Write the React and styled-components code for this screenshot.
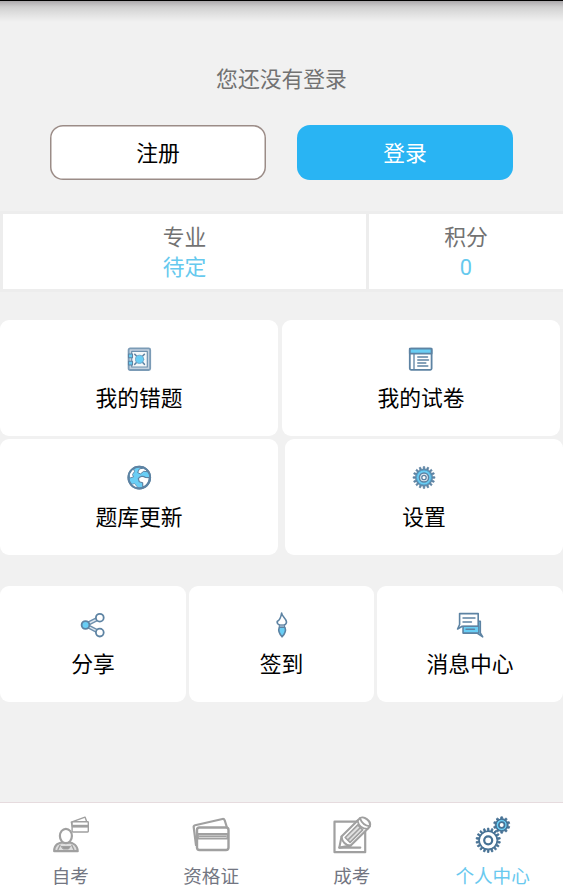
import React from "react";
import styled, { createGlobalStyle } from "styled-components";

const GlobalStyle = createGlobalStyle`
  * { box-sizing: border-box; }
  body { margin: 0; background: #f1f1f1; }
  button { font: inherit; padding: 0; margin: 0; border: 0; background: none; cursor: pointer; }
`;

const Screen = styled.div`
  width: 563px;
  height: 888px;
  display: flex;
  flex-direction: column;
  overflow: hidden;
  background: #f1f1f1;
  font-family: Roboto, "Noto Sans CJK SC", sans-serif;
  font-size: 21.8px;
  line-height: 30px;
  color: #000;
`;

const StatusShade = styled.div`
  flex: none;
  height: 22px;
  border-top: 1px solid #000;
  background: linear-gradient(#a9a7a9 0, #b8b6b8 2px, #cfcfcf 6px, #dcdcdc 11px, #e7e7e7 16px, #f1f1f1 21px);
`;

const Account = styled.header`
  flex: none;
  height: 189px;
  padding: 43px 50px 0;
`;

const Prompt = styled.p`
  margin: 0 0 30px;
  text-align: center;
  color: #727272;
`;

const AuthActions = styled.div`
  display: grid;
  grid-template-columns: 216px 216px;
  justify-content: space-between;
`;

const AuthButton = styled.button`
  height: 54.5px;
  border-radius: 13px;
  && {
    color: ${(p) => (p.$primary ? "#fff" : "#000")};
    background: ${(p) => (p.$primary ? "#29b4f3" : "#fff")};
    box-shadow: ${(p) => (p.$primary ? "none" : "inset 0 0 0 1.5px #9b8c87")};
    padding-top: 3px;
  }
`;

const Stats = styled.section`
  flex: none;
  display: grid;
  grid-template-columns: 363px 194px;
  gap: 3px;
  padding: 3px 0 3px 3px;
  background: #ededed;
`;

const Stat = styled.div`
  height: 75px;
  padding-top: 9px;
  background: #fff;
  text-align: center;
  color: #727272;
`;

const StatValue = styled.div`
  color: #66c9ee;
`;

const Menu = styled.main`
  flex: 1;
  padding-top: 28px;
`;

const MenuRow = styled.div`
  display: grid;
  grid-template-columns: ${(p) => p.$columns};
  justify-content: space-between;
  width: ${(p) => p.$width || "563px"};
  margin-bottom: ${(p) => p.$space || "3px"};
`;

const Tile = styled.button`
  && {
    height: 116px;
    padding-top: 25px;
    border-radius: 9px;
    background: #fff;
  }
  display: flex;
  flex-direction: column;
  align-items: center;
  gap: 11px;
`;

const TileIcon = styled.svg`
  width: 28px;
  height: 28px;
  flex: none;
  fill: none;
  stroke: #5d83a3;
  stroke-width: 1.8;
  stroke-linejoin: round;
  stroke-linecap: round;
`;

const TabBar = styled.nav`
  flex: none;
  height: 86px;
  display: grid;
  grid-template-columns: repeat(4, 1fr);
  border-top: 1px solid #e6dbde;
  background: #fff;
`;

const Tab = styled.button`
  display: flex;
  flex-direction: column;
  align-items: center;
  && {
    padding-top: 12px;
    font-size: 18.6px;
    line-height: 28px;
    color: ${(p) => (p.$active ? "#69c9ef" : "#737682")};
  }
`;

const TabIcon = styled.svg`
  width: 40px;
  height: 40px;
  flex: none;
  margin-bottom: 8px;
  fill: none;
  stroke: #a0a0a0;
  stroke-width: 2;
  stroke-linejoin: round;
  stroke-linecap: round;
`;

const SKY = "#69cef5";

const gearPath = (cx, cy, outer, inner, teeth) => {
  const step = (Math.PI * 2) / teeth;
  const points = [];
  for (let i = 0; i < teeth; i += 1) {
    [[-0.28, inner], [-0.17, outer], [0.17, outer], [0.28, inner]].forEach(([t, r]) => {
      const a = (i + t) * step;
      points.push(`${(cx + r * Math.sin(a)).toFixed(2)} ${(cy - r * Math.cos(a)).toFixed(2)}`);
    });
  }
  return `M${points.join("L")}Z`;
};

const SafeIcon = () => (
  <TileIcon viewBox="0 0 28 28">
    <rect x="3.6" y="3.4" width="21.6" height="21.6" rx="1.5" fill="#c3d1df" stroke="#7b9bb6" />
    <rect x="6.7" y="6.4" width="15.6" height="15.6" fill="#f5f8fa" stroke="#6e91ae" strokeWidth="1.2" />
    <path d="M9.8 9.3l9.6 10M19.4 9.3l-9.6 10" strokeWidth="1.6" />
    <circle cx="14.6" cy="14.3" r="4.1" fill={SKY} stroke="#6fa9cb" strokeWidth="1" />
    <rect x="3.5" y="9" width="4" height="3.8" fill={SKY} strokeWidth="1.1" />
    <rect x="3.5" y="16.2" width="4" height="3.8" fill={SKY} strokeWidth="1.1" />
  </TileIcon>
);

const PaperIcon = () => (
  <TileIcon viewBox="0 0 28 28">
    <rect x="2.8" y="3.6" width="21.8" height="21.2" rx="1.2" fill="#fff" />
    <rect x="2.8" y="3.6" width="21.8" height="5" fill={SKY} />
    <path d="M7 8.8v15.5" strokeWidth="1.3" />
    <path d="M10.8 12h9.7M10.8 15h10.7M10.8 18h8M10.8 21h10" strokeWidth="1.5" />
  </TileIcon>
);

const GlobeIcon = () => (
  <TileIcon viewBox="0 0 28 28">
    <circle cx="14.3" cy="13.6" r="10.9" fill={SKY} />
    <path d="M12.8 8.2l1.7-3.4 4-.6c1.800.8 3.200 2 4.200 3.500l-4-.4-3 2.400Z" fill="#fff" strokeWidth="1" />
    <path d="M4.200 10.500c.8-2.500 2.200-4.300 4.300-5.700l1 2.700-2 3 1 2.500-3.500 1Z" fill="#fff" strokeWidth=".9" />
    <path d="M13.300 14.800c1.200-2.800 5-3.200 7.200-1.300l3.800.2c-.2 4-2.600 7.800-6.500 9.300l-.2-4.200-3.300-1Z" fill="#fff" strokeWidth="1.2" />
    <path d="M6.500 20.500l3-1 3.500 4.300c-2.600 0-4.800-1.200-6.500-3.300Z" fill="#fff" strokeWidth=".7" />
    <circle cx="14.3" cy="13.6" r="10.9" />
  </TileIcon>
);

const SettingsIcon = () => (
  <TileIcon viewBox="0 0 28 28">
    <path d={gearPath(14, 13.5, 11, 8.6, 16)} fill="#5d83a3" strokeWidth=".6" />
    <circle cx="14" cy="13.5" r="7.5" fill={SKY} stroke="#569bc3" strokeWidth="1" />
    <circle cx="14" cy="13.5" r="4.6" fill="#e5edf3" strokeWidth="1.5" />
    <circle cx="14" cy="13.5" r="2.2" fill="#fff" strokeWidth="1.3" />
  </TileIcon>
);

const ShareIcon = () => (
  <TileIcon viewBox="0 0 28 28">
    <path d="M6.5 14L21 6.7M6.5 14L21 21.6" strokeWidth="4.2" stroke="#6d8fad" />
    <path d="M6.5 14L21 6.7M6.5 14L21 21.6" strokeWidth="1.4" stroke="#dce6ef" />
    <circle cx="20.8" cy="6.7" r="3.9" fill="#fff" />
    <circle cx="20.8" cy="21.6" r="3.9" fill="#fff" />
    <circle cx="6.5" cy="14" r="3.9" fill={SKY} />
  </TileIcon>
);

const BrushIcon = () => (
  <TileIcon viewBox="0 0 28 28">
    <path d="M13.6 2c.2 3.5 4.9 5.5 4.9 9 0 1.5-1.4 2.7-2.6 3.2h-3.8C10 13.5 8.9 12 9.2 10.5 11.7 9 13 6.5 13.6 2Z" fill="#fff" strokeWidth="1.6" />
    <path d="M11.7 14.2h4.8v2h-4.8Z" fill="#fff" strokeWidth="1" />
    <path d="M11.3 16.3h5.6c1.5 3.7-.4 7-2.8 9.5-2.5-2.7-4.3-5.7-2.8-9.5Z" fill={SKY} strokeWidth="1.6" />
  </TileIcon>
);

const ChatIcon = () => (
  <TileIcon viewBox="0 0 28 28">
    <path d="M7.2 14.5h14.2v-4.3h2.9v11.6l2.4 4.1-5.6-3.7H7.2Z" fill={SKY} strokeWidth="1.6" />
    <path d="M3.6 2.6h18.600v12.700H6.200L1.600 18l2-4.500Z" fill="#fff" strokeWidth="1.6" />
    <path d="M7 7h12M7 11h8.5" strokeWidth="1.4" />
    <path d="M7.200 15.300h15.500v6.500h-15.500Z" fill={SKY} strokeWidth="1.2" />
    <path d="M10 18.3h8.5" strokeWidth="1.4" />
  </TileIcon>
);

const StudentIcon = () => (
  <TabIcon viewBox="0 0 40 40">
    <path d="M22.3 11.5l-1-4.3L35 2.1l1.4 3.700" strokeWidth="1.4" />
    <rect x="22.1" y="6.7" width="16.2" height="10.3" rx=".7" fill="#fff" strokeWidth="1.4" />
    <path d="M22.1 11.2h16.2" strokeWidth="2.8" strokeLinecap="butt" />
    <path d="M4.2 36.2c0-7 5.1-8.7 9-8.7h5c5.2 0 9.3 3 9.5 8.700Z" fill="#dedede" strokeWidth="2.2" />
    <path d="M8 34.5l2-4.3M23.8 34.5l-2-4.3" strokeWidth="1.4" />
    <path d="M11.5 31.5h9l-2 2.5h-5Z" fill="#999" strokeWidth="1" />
    <ellipse cx="15.9" cy="21" rx="6" ry="7.2" fill="#fff" strokeWidth="2.2" />
  </TabIcon>
);

const CardsIcon = () => (
  <TabIcon viewBox="0 0 40 40">
    <path d="M5 30L2.7 12.2c-.2-1.2.3-1.7 1.4-2L31.5 4c1.2-.2 1.8.2 2.2 1.300l2 6.500" strokeWidth="2.2" />
    <rect x="6" y="12.5" width="31.5" height="22.5" rx="2.5" fill="#fff" strokeWidth="2.4" />
    <path d="M7 19h29.500v4.600H7Z" fill="#e3e3e3" strokeWidth="1.8" />
    <path d="M8.500 21.300h26.500" strokeWidth="1.4" />
  </TabIcon>
);

const WritingIcon = () => (
  <TabIcon viewBox="0 0 40 40">
    <path d="M2.5 6.7h30.700v30.500H2.500Z" strokeWidth="2.2" />
    <path d="M7.300 32.600h21" strokeWidth="2.2" />
    <path d="M7.300 32.600l2.200-11L27.400 3.700c3-4 13.500 2.300 9.800 8.500L18.700 30.600Z" fill="#fff" strokeWidth="2.1" />
    <path d="M9.500 21.600c.7 5 4 8.500 9.200 9M25.500 5.600c1 4.900 4.700 8.100 10 8.300M28 3.200c1.500 4.500 5 7.500 10 8" strokeWidth="1.9" />
    <path d="M13.200 22.500L25.800 9.900l4.900 4.900-12.600 12.600Z" fill="#e1e1e1" strokeWidth="1.7" />
    <path d="M16 24.900L28.200 12.700" strokeWidth="1.6" />
  </TabIcon>
);

const GearsIcon = () => (
  <TabIcon viewBox="0 0 40 40">
    <g stroke="#467194">
      <path d={gearPath(15.2, 25.3, 12.2, 9.5, 18)} fill="#467194" strokeWidth=".8" />
      <circle cx="15.2" cy="25.3" r="8.9" fill="#fff" strokeWidth="1.2" />
      <circle cx="15.2" cy="25.3" r="4" fill="#fff" strokeWidth="2.2" />
      <path d={gearPath(28.7, 10, 8.2, 6.4, 10)} fill="#467194" strokeWidth=".8" />
      <circle cx="28.7" cy="10" r="5.6" fill={SKY} strokeWidth="1" />
      <circle cx="28.7" cy="10" r="2.8" fill="#fff" strokeWidth="1.7" />
    </g>
  </TabIcon>
);

const menuRows = [
  {
    columns: "278px 278px",
    width: "560px",
    items: [["我的错题", SafeIcon], ["我的试卷", PaperIcon]],
  },
  {
    columns: "278px 278px",
    space: "31px",
    items: [["题库更新", GlobeIcon], ["设置", SettingsIcon]],
  },
  {
    columns: "186px 185px 186px",
    items: [["分享", ShareIcon], ["签到", BrushIcon], ["消息中心", ChatIcon]],
  },
];

const tabs = [
  ["自考", StudentIcon],
  ["资格证", CardsIcon],
  ["成考", WritingIcon],
  ["个人中心", GearsIcon],
];

export default function App() {
  return (
    <Screen>
      <GlobalStyle />
      <StatusShade />
      <Account>
        <Prompt>您还没有登录</Prompt>
        <AuthActions>
          <AuthButton>注册</AuthButton>
          <AuthButton $primary>登录</AuthButton>
        </AuthActions>
      </Account>
      <Stats>
        <Stat>
          专业
          <StatValue>待定</StatValue>
        </Stat>
        <Stat>
          积分
          <StatValue>0</StatValue>
        </Stat>
      </Stats>
      <Menu>
        {menuRows.map((row) => (
          <MenuRow key={row.items[0][0]} $columns={row.columns} $width={row.width} $space={row.space}>
            {row.items.map(([label, Icon]) => (
              <Tile key={label}>
                <Icon />
                {label}
              </Tile>
            ))}
          </MenuRow>
        ))}
      </Menu>
      <TabBar>
        {tabs.map(([label, Icon], index) => (
          <Tab key={label} $active={index === 3}>
            <Icon />
            {label}
          </Tab>
        ))}
      </TabBar>
    </Screen>
  );
}
